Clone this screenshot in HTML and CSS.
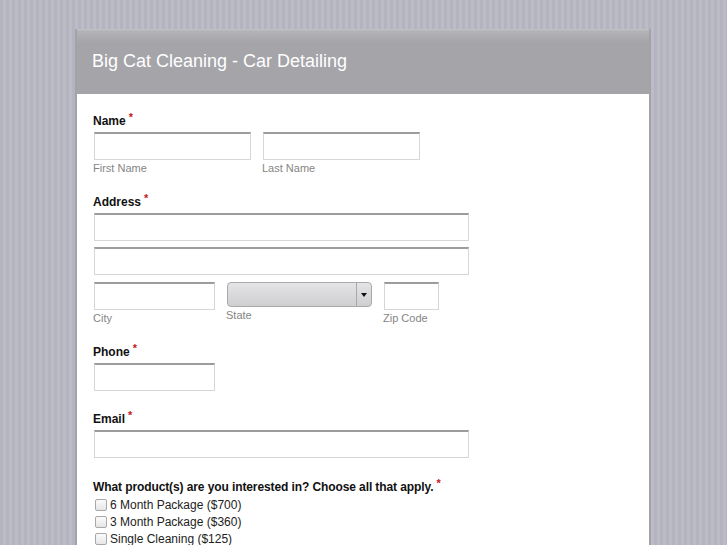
FILE: index.html
```html
<!DOCTYPE html>
<html lang="en">

<head>
    <meta charset="UTF-8">
    <meta name="viewport" content="width=device-width, initial-scale=1.0">
    <title>Big Cat Cleaning - Car Detailing</title>
    <link rel="stylesheet" href="styles.css">
</head>

<body>
    <div class="form-wrap">
        <div class="form-header">
            <h1 class="form-title">Big Cat Cleaning - Car Detailing</h1>
        </div>
        <div class="form-body">
            <!-- 姓名 -->
            <div class="field">
                <div class="label">Name<span class="req">*</span></div>
                <div class="row">
                    <div class="col">
                        <div class="input w-name"></div>
                        <div class="sub">First Name</div>
                    </div>
                    <div class="col">
                        <div class="input w-name"></div>
                        <div class="sub">Last Name</div>
                    </div>
                </div>
            </div>
            <!-- 地址 -->
            <div class="field">
                <div class="label">Address<span class="req">*</span></div>
                <div class="input w-full"></div>
                <div class="input w-full line2"></div>
                <div class="row addr-row">
                    <div class="col">
                        <div class="input w-city"></div>
                        <div class="sub">City</div>
                    </div>
                    <div class="col">
                        <div class="select">
                            <span class="select-arrow"></span>
                        </div>
                        <div class="sub">State</div>
                    </div>
                    <div class="col">
                        <div class="input w-zip"></div>
                        <div class="sub">Zip Code</div>
                    </div>
                </div>
            </div>
            <div class="field no-sub">
                <div class="label">Phone<span class="req">*</span></div>
                <div class="input w-city"></div>
            </div>
            <div class="field no-sub">
                <div class="label">Email<span class="req">*</span></div>
                <div class="input w-full"></div>
            </div>
            <div class="field products">
                <div class="label narrow">What product(s) are you interested in? Choose all that apply.<span class="req">*</span></div>
                <div class="checks">
                    <label class="check"><span class="box"></span>6 Month Package ($700)</label>
                    <label class="check"><span class="box"></span>3 Month Package ($360)</label>
                    <label class="check"><span class="box"></span>Single Cleaning ($125)</label>
                </div>
            </div>
        </div>
    </div>
</body>

</html>
```

FILE: styles.css
```css
* {
    margin: 0;
    padding: 0;
    box-sizing: border-box;
}

body {
    font-family: "Liberation Sans", Arial, sans-serif;
    background-color: #b5b6c1;
    background-image: repeating-linear-gradient(90deg, #b3b4bf 0, #b3b4bf 3px, #bbbcc6 3px, #bbbcc6 6px);
    padding-top: 29px;
    height: 545px;
    overflow: hidden;
}

.form-wrap {
    width: 576px;
    margin-left: 75px;
    border-left: 2px solid #a2a2a8;
    border-right: 2px solid #a2a2a8;
    background-color: #fff;
    min-height: 600px;
}

.form-header {
    height: 65px;
    background: linear-gradient(#c4c4c8 0, #b4b4b8 2px, #a9a9ae 10px, #a4a4a9 14px, #a4a4a9 100%);
    display: flex;
    align-items: center;
    padding-left: 15px;
}

.form-title {
    color: #fff;
    font-size: 18px;
    font-weight: normal;
}

.form-body {
    padding: 20px 16px 0 16px;
}

.field {
    margin-bottom: 20px;
}

.field.no-sub {
    margin-bottom: 21px;
}

.field.products {
    padding-top: 1px;
}

.label {
    font-size: 12px;
    font-weight: bold;
    line-height: 14px;
    color: #111;
    margin-bottom: 4px;
}

.label.narrow {
    letter-spacing: -0.1px;
    margin-bottom: 2px;
}

.req {
    color: #c8161d;
    font-size: 11px;
    position: relative;
    top: -4px;
    margin-left: 3px;
}

.row {
    display: flex;
    gap: 11px;
}

.addr-row {
    margin-top: 7px;
}

.col {
    display: flex;
    flex-direction: column;
}

.input {
    height: 28px;
    margin-left: 1px;
    border: 1px solid #d6d6d6;
    border-top: 2px solid #9c9c9c;
    background-color: #fff;
}

.w-name {
    width: 157px;
}

.w-full {
    width: 375px;
}

.line2 {
    margin-top: 6px;
}

.w-city {
    width: 121px;
}

.w-zip {
    width: 55px;
}

.sub {
    font-size: 11px;
    line-height: 14px;
    color: #858585;
    margin-top: 1px;
}

.select {
    width: 145px;
    height: 25px;
    margin-left: 1px;
    border: 1px solid #a9a9a9;
    border-radius: 4px;
    background: linear-gradient(#e4e4e6, #cfcfd2);
    position: relative;
}

.select-arrow {
    position: absolute;
    right: 0;
    top: 0;
    width: 15px;
    height: 100%;
    border-left: 1px solid #a9a9a9;
}

.select-arrow::after {
    content: "";
    position: absolute;
    left: 4px;
    top: 10px;
    border-left: 3px solid transparent;
    border-right: 3px solid transparent;
    border-top: 4px solid #111;
}

.check {
    display: flex;
    align-items: center;
    height: 17px;
    font-size: 12px;
    color: #222;
}

.box {
    width: 12px;
    height: 12px;
    margin-left: 2px;
    margin-right: 3px;
    border: 1px solid #a8a8a8;
    border-radius: 2px;
    background: linear-gradient(#fbfbfb, #e6e6e6);
}
```
